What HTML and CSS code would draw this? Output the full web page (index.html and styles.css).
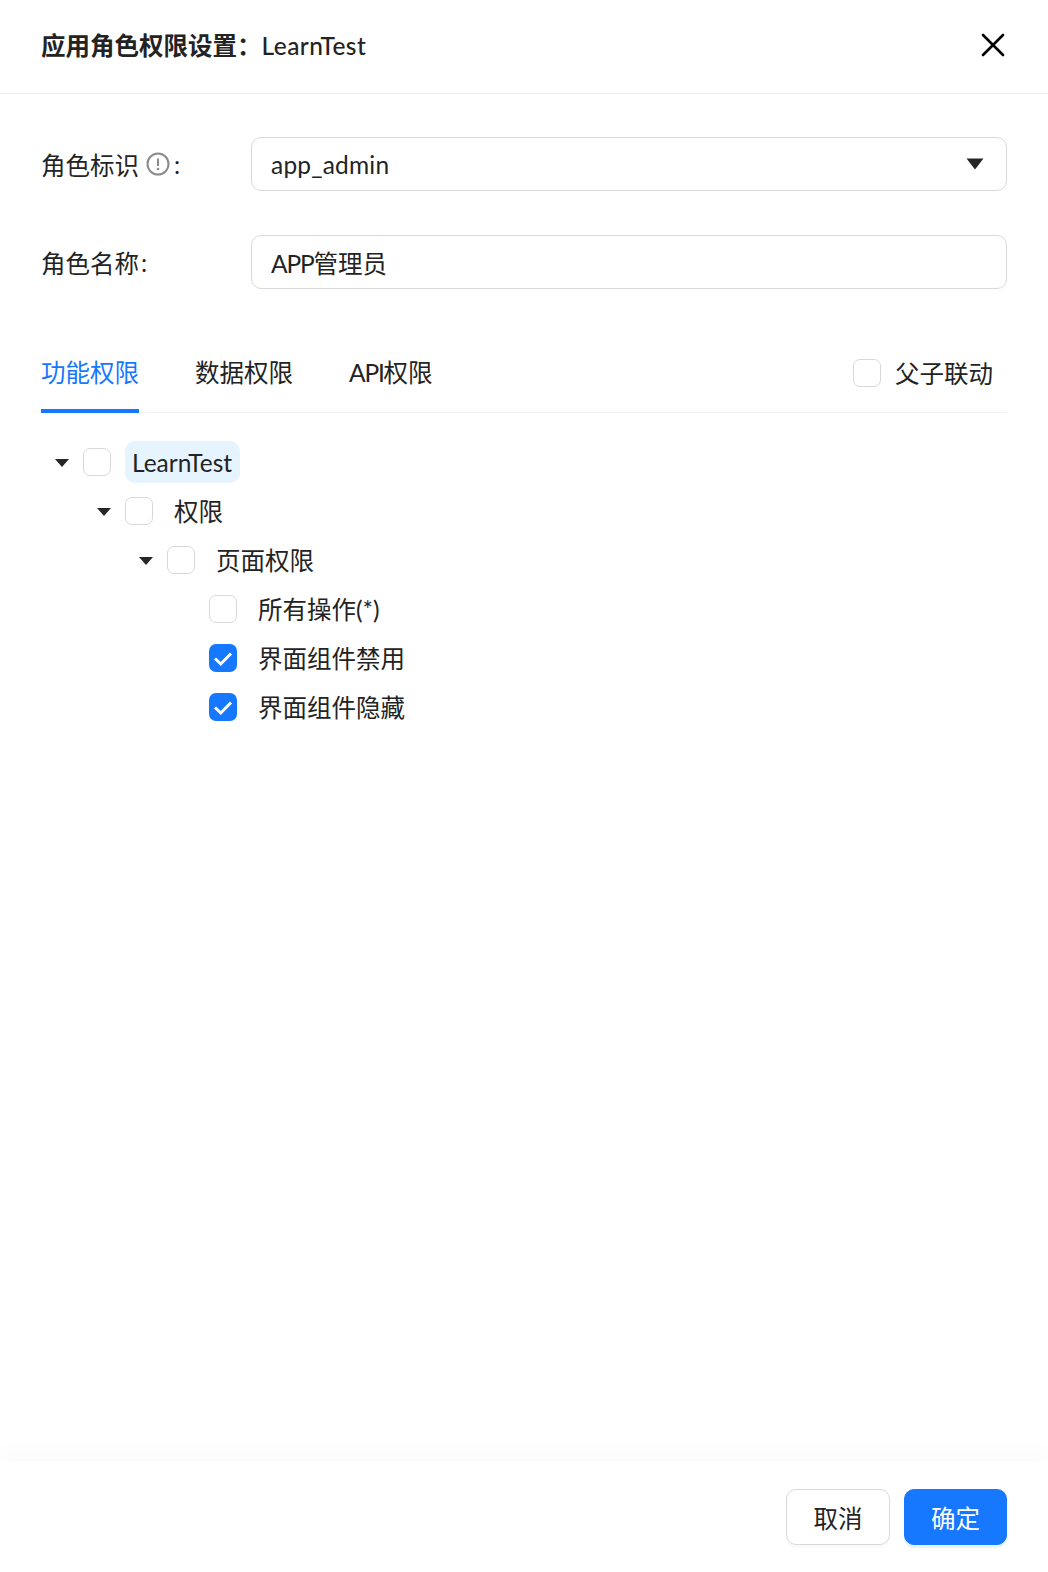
FILE: index.html
```html
<!DOCTYPE html>
<html lang="zh-CN">
<head>
  <meta charset="UTF-8" />
  <title>应用角色权限设置</title>
  <link rel="stylesheet" href="styles.css">
</head>
<body>
  <div class="drawer">
    <header class="drawer-header">
      <h1 class="drawer-title"><b>应用角色权限设置：</b><span class="app-name">LearnTest</span></h1>
      <button class="close-btn" aria-label="关闭">
        <svg viewBox="0 0 24 24" width="24" height="24"><path d="M2 2 L22 22 M22 2 L2 22" fill="none" stroke="#000" stroke-width="2.6" stroke-linecap="round"/></svg>
      </button>
    </header>

    <main class="drawer-body">
      <div class="form-row">
        <label class="form-label">角色标识
          <svg class="info-icon" viewBox="0 0 24 24" width="24" height="24"><circle cx="12" cy="12" r="10.5" fill="none" stroke="#8a8a8a" stroke-width="2"/><path d="M12 6.5 V14" stroke="#8a8a8a" stroke-width="2" fill="none"/><circle cx="12" cy="17" r="1.3" fill="#8a8a8a"/></svg>
          <span class="colon">:</span>
        </label>
        <div class="input select">
          <span class="role-key">app_admin</span>
          <svg class="select-caret" viewBox="0 0 18 12" width="18" height="12"><path d="M0.5 0.5 H17.5 L9 11.5 Z" fill="#262626"/></svg>
        </div>
      </div>
      <div class="form-row">
        <label class="form-label">角色名称<span class="colon">:</span></label>
        <div class="input"><span><span class="caps">APP</span>管理员</span></div>
      </div>

      <div class="tabs">
        <a class="tab active">功能权限</a>
        <a class="tab">数据权限</a>
        <a class="tab"><span><span class="caps">API</span>权限</span></a>
        <label class="link-check"><span class="check"></span>父子联动</label>
      </div>

      <ul class="tree">
        <li class="tree-row">
          <span class="switcher"></span><span class="check"></span><span class="tree-title selected">LearnTest</span>
        </li>
        <li class="tree-row level-1">
          <span class="switcher"></span><span class="check"></span><span class="tree-title">权限</span>
        </li>
        <li class="tree-row level-2">
          <span class="switcher"></span><span class="check"></span><span class="tree-title">页面权限</span>
        </li>
        <li class="tree-row level-3">
          <span class="switcher none"></span><span class="check"></span><span class="tree-title">所有操作(*)</span>
        </li>
        <li class="tree-row level-3">
          <span class="switcher none"></span>
          <span class="check checked"><svg viewBox="0 0 28 28" width="28" height="28"><path d="M6 14.5 L11.8 20 L22 9.5" fill="none" stroke="#fff" stroke-width="3"/></svg></span>
          <span class="tree-title">界面组件禁用</span>
        </li>
        <li class="tree-row level-3">
          <span class="switcher none"></span>
          <span class="check checked"><svg viewBox="0 0 28 28" width="28" height="28"><path d="M6 14.5 L11.8 20 L22 9.5" fill="none" stroke="#fff" stroke-width="3"/></svg></span>
          <span class="tree-title">界面组件隐藏</span>
        </li>
      </ul>
    </main>

    <footer class="drawer-footer">
      <button class="btn">取消</button>
      <button class="btn primary">确定</button>
    </footer>
  </div>
</body>
</html>
```

FILE: styles.css
```css
* {
  box-sizing: border-box;
  margin: 0;
  padding: 0;
}
html, body {
  width: 1048px;
  height: 1572px;
  overflow: hidden;
  background-color: #fff;
}
body {
  font-family: "Lato", "Noto Sans CJK SC", sans-serif;
  font-size: 24.5px;
  color: #232323;
}
.drawer {
  height: 100%;
  display: flex;
  flex-direction: column;
}
.drawer-header {
  height: 94px;
  padding: 0 43px 0 41px;
  border-bottom: 1px solid #f0f0f0;
  display: flex;
  align-items: center;
  justify-content: space-between;
}
.drawer-title {
  font-size: 24.5px;
  font-weight: 500;
  line-height: 1;
}
.drawer-title b {
  font-weight: 700;
}
.app-name {
  letter-spacing: 0.45px;
}
.role-key {
  letter-spacing: 0.2px;
}
.caps {
  letter-spacing: -1.2px;
}
.close-btn {
  width: 24px;
  height: 24px;
  border: none;
  background: none;
  display: block;
  margin-top: -3px;
}
.drawer-body {
  flex: 1;
  padding: 43px 41px 0 41px;
}
.form-row {
  display: flex;
  align-items: center;
  margin-bottom: 44px;
}
.form-label {
  width: 210px;
  display: flex;
  align-items: center;
}
.info-icon {
  margin: 0 2px 0 7px;
}
.colon {
  margin-left: 2px;
}
.input {
  flex: 1;
  height: 54px;
  padding: 0 20px 0 19px;
  border: 1.5px solid #d9d9d9;
  border-radius: 10px;
  display: flex;
  align-items: center;
  justify-content: space-between;
}
.select-caret {
  margin-right: 2px;
}
.tabs {
  height: 80px;
  border-bottom: 1px solid #f0f0f0;
  display: flex;
  align-items: center;
  gap: 56px;
}
.tab {
  height: 100%;
  padding-bottom: 2px;
  display: flex;
  align-items: center;
  position: relative;
}
.tab.active {
  color: #1677ff;
}
.tab.active::after {
  content: "";
  position: absolute;
  left: 0;
  right: 0;
  bottom: -1px;
  height: 4px;
  background-color: #1677ff;
}
.link-check {
  margin-left: auto;
  margin-right: 14px;
  display: flex;
  align-items: center;
  gap: 14px;
}
.check {
  width: 28px;
  height: 28px;
  flex: none;
  display: block;
  background-color: #fff;
  border: 1.5px solid #d9d9d9;
  border-radius: 7px;
}
.check.checked {
  background-color: #1677ff;
  border: none;
}
.check svg {
  display: block;
}
.tree {
  list-style: none;
  padding-top: 28px;
}
.tree-row {
  height: 49px;
  display: flex;
  align-items: flex-start;
}
.level-1 { padding-left: 42px; }
.level-2 { padding-left: 84px; }
.level-3 { padding-left: 126px; }
.switcher {
  width: 42px;
  height: 42px;
  margin-top: 1px;
  flex: none;
  display: flex;
  align-items: center;
  justify-content: center;
}
.switcher::before {
  content: "";
  border-left: 7px solid transparent;
  border-right: 7px solid transparent;
  border-top: 8px solid #262626;
  margin-top: -1px;
}
.switcher.none::before {
  display: none;
}
.tree-row .check {
  margin: 7px 14px 0 0;
}
.tree-title {
  height: 42px;
  padding: 0 7px;
  line-height: 44px;
  border-radius: 10px;
}
.tree-title.selected {
  padding-right: 8px;
  background-color: #e6f4ff;
}
.drawer-footer {
  height: 111px;
  padding: 28px 41px 0 0;
  display: flex;
  justify-content: flex-end;
  align-items: flex-start;
  gap: 14px;
  background-color: #fff;
  box-shadow: 0 -10px 20px rgba(0, 0, 0, 0.02);
}
.btn {
  width: 104px;
  height: 56px;
  font-family: inherit;
  font-size: 24.5px;
  color: #232323;
  background-color: #fff;
  border: 1.5px solid #d9d9d9;
  border-radius: 10px;
  box-shadow: 0 3px 0 rgba(0, 0, 0, 0.02);
}
.btn.primary {
  width: 103px;
  color: #fff;
  background-color: #1677ff;
  border-color: #1677ff;
  box-shadow: 0 3px 0 rgba(5, 145, 255, 0.1);
}
```
